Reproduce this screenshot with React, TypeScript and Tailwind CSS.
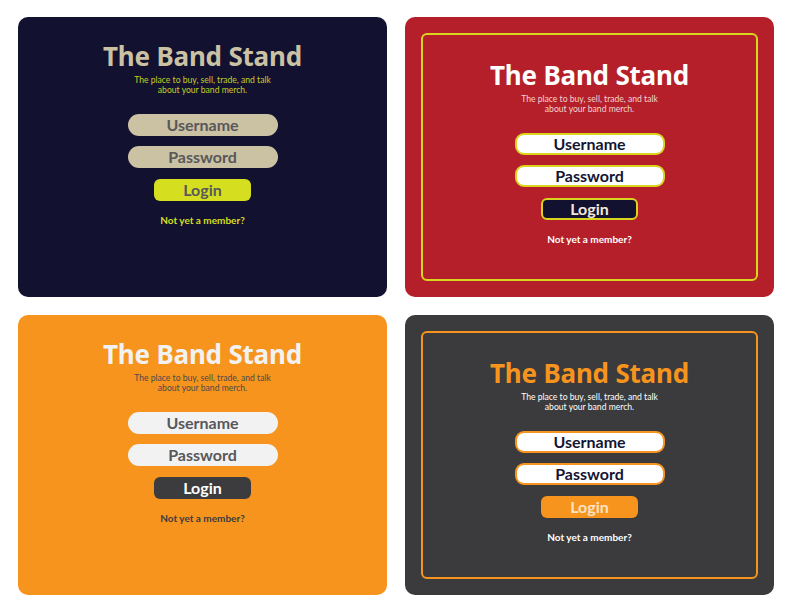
import React from 'react';

interface Theme {
  panel: string;
  frame: string;
  body: string;
  title: string;
  tagline: string;
  field: string;
  fieldText: string;
  button: string;
  buttonText: string;
  link: string;
}

const themes: Theme[] = [
  {
    panel: 'bg-[#121230]',
    frame: 'border-transparent',
    body: 'pt-[6px]',
    title: 'text-[#cbc1a3]',
    tagline: 'text-[#c9cc24]',
    field: 'bg-[#cbc1a3] border-transparent rounded-full',
    fieldText: 'text-[#58585a]',
    button: 'bg-[#d6df1f] border-transparent',
    buttonText: 'text-[#58585a]',
    link: 'text-[#d6df1f]',
  },
  {
    panel: 'bg-[#b41f29]',
    frame: 'border-[#d9d41e]',
    body: 'pt-[25px]',
    title: 'text-white',
    tagline: 'text-[#f3d3d3]',
    field: 'bg-white border-[#d9d41e] rounded-[9px]',
    fieldText: 'text-[#141433]',
    button: 'bg-[#121230] border-[#d9d41e]',
    buttonText: 'text-[#f3e6da]',
    link: 'text-white',
  },
  {
    panel: 'bg-[#f7941d]',
    frame: 'border-transparent',
    body: 'pt-[6px]',
    title: 'text-[#f2f2f2]',
    tagline: 'text-[#4a4a4c]',
    field: 'bg-[#f2f2f2] border-transparent rounded-full',
    fieldText: 'text-[#58585a]',
    button: 'bg-[#3c3c3e] border-transparent',
    buttonText: 'text-white',
    link: 'text-[#3c3c3e]',
  },
  {
    panel: 'bg-[#3b3b3d]',
    frame: 'border-[#f7941d]',
    body: 'pt-[25px]',
    title: 'text-[#f7941d]',
    tagline: 'text-white',
    field: 'bg-white border-[#f7941d] rounded-[9px]',
    fieldText: 'text-[#141433]',
    button: 'bg-[#f7941d] border-transparent',
    buttonText: 'text-[#fbe3c4]',
    link: 'text-white',
  },
];

const LoginCard: React.FC<{ theme: Theme }> = ({ theme }) => (
  <div className={`h-[280px] rounded-[10px] p-4 ${theme.panel}`}>
    <div className={`h-full rounded-[6px] border-2 ${theme.frame}`}>
      <div className={`flex flex-col items-center ${theme.body}`}>
        <h1
          className={`text-[26px] leading-[30px] font-bold tracking-[-0.2px] ${theme.title}`}
          style={{ fontFamily: '"Noto Sans", sans-serif' }}
        >
          The Band Stand
        </h1>
        <p className={`mt-[4px] text-center text-[8.6px] leading-[10px] ${theme.tagline}`}>
          The place to buy, sell, trade, and talk
          <br />
          about your band merch.
        </p>

        <div className="mt-[19px] flex flex-col items-center gap-[10px]">
          {['Username', 'Password'].map((label) => (
            <div
              key={label}
              className={`flex h-[22px] w-[150px] items-center justify-center border-2 ${theme.field}`}
            >
              <span className={`text-[16px] font-bold leading-none ${theme.fieldText}`}>{label}</span>
            </div>
          ))}
          <button
            className={`mt-[1px] flex h-[22px] w-[97px] items-center justify-center rounded-[6px] border-2 ${theme.button}`}
          >
            <span className={`text-[16px] font-bold leading-none ${theme.buttonText}`}>Login</span>
          </button>
        </div>

        <a className={`mt-[12px] text-[10px] font-bold ${theme.link}`}>Not yet a member?</a>
      </div>
    </div>
  </div>
);

export default function App() {
  return (
    <div
      className="min-h-[612px] w-[792px] bg-white pl-[18px] pt-[17px]"
      style={{ fontFamily: 'Lato, "Open Sans", sans-serif' }}
    >
      <div className="grid w-[756px] grid-cols-2 gap-[18px]">
        {themes.map((theme, i) => (
          <LoginCard key={i} theme={theme} />
        ))}
      </div>
    </div>
  );
}
